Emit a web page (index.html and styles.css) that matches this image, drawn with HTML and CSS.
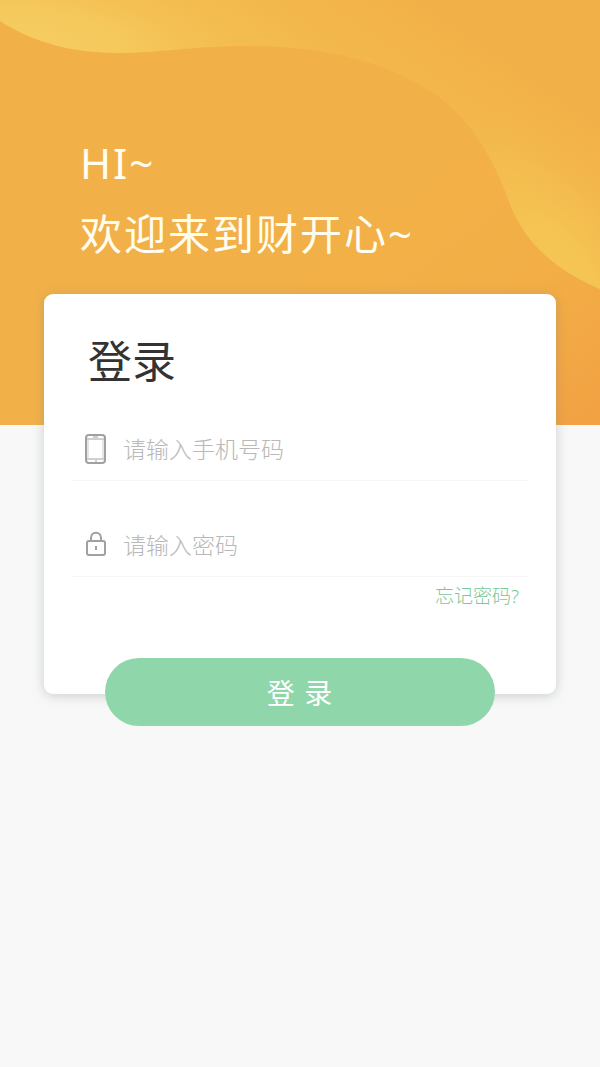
FILE: index.html
```html
<!DOCTYPE html>
<html lang="zh-CN">
<head>
    <meta charset="UTF-8">
    <meta name="viewport" content="width=device-width, initial-scale=1.0">
    <title>登录</title>
    <link rel="stylesheet" href="styles.css">
</head>
<body>
    <header class="banner">
        <svg class="banner-wave" viewBox="0 0 600 425" preserveAspectRatio="none" aria-hidden="true">
            <defs>
                <linearGradient id="base" gradientUnits="userSpaceOnUse" x1="420" y1="180" x2="600" y2="425">
                    <stop offset="0" stop-color="#f2b148"/>
                    <stop offset="0.5" stop-color="#f3ae46"/>
                    <stop offset="1" stop-color="#f2a143"/>
                </linearGradient>
                <linearGradient id="wave-mid" gradientUnits="userSpaceOnUse" x1="390" y1="110" x2="450" y2="20">
                    <stop offset="0" stop-color="#f3b94c"/>
                    <stop offset="1" stop-color="#f2b148"/>
                </linearGradient>
                <radialGradient id="wave-left" gradientUnits="userSpaceOnUse" cx="0" cy="0" r="1" gradientTransform="translate(30 40) rotate(8) scale(330 110)">
                    <stop offset="0" stop-color="#f6cc60"/>
                    <stop offset="0.3" stop-color="#f6cc60" stop-opacity="0.8"/>
                    <stop offset="1" stop-color="#f4b94d" stop-opacity="0"/>
                </radialGradient>
                <radialGradient id="wave-right" gradientUnits="userSpaceOnUse" cx="0" cy="0" r="1" gradientTransform="translate(560 270) rotate(55) scale(200 95)">
                    <stop offset="0" stop-color="#f5c654"/>
                    <stop offset="0.3" stop-color="#f5c654" stop-opacity="0.8"/>
                    <stop offset="1" stop-color="#f4b94d" stop-opacity="0"/>
                </radialGradient>
                <path id="wave-shape" d="M0 0V21C36 44 76 53 119 53C160 53 190 46 247 46C325 46 391 62 440 98C472 122 494 160 508 199C521 237 550 268 600 289V0Z"/>
            </defs>
            <rect width="600" height="425" fill="url(#base)"/>
            <use href="#wave-shape" fill="url(#wave-mid)"/>
            <use href="#wave-shape" fill="url(#wave-left)"/>
            <use href="#wave-shape" fill="url(#wave-right)"/>
        </svg>
        <p class="greeting">HI~<br>欢迎来到财开心~</p>
    </header>

    <main class="card">
        <h1>登录</h1>
        <form>
            <div class="input-group">
                <label for="phone" aria-label="手机号码">
                    <svg width="24" height="32" viewBox="0 0 24 32" fill="none" stroke="#a0a0a0">
                        <rect x="2" y="2" width="19" height="28" rx="3" stroke-width="2"/>
                        <path d="M3 6H20M3 26H20"/>
                        <path d="M4 6V26M19 6V26" stroke="#ccc"/>
                        <path d="M9 4H14M11 28H13"/>
                    </svg>
                </label>
                <input type="tel" id="phone" placeholder="请输入手机号码">
            </div>
            <div class="input-group">
                <label for="password" aria-label="密码">
                    <svg width="24" height="32" viewBox="0 0 24 32" fill="none" stroke="#a0a0a0" stroke-width="2">
                        <rect x="3" y="12" width="18" height="14" rx="2"/>
                        <path d="M7 12V9C7 2 17 2 17 9V12"/>
                        <path d="M12 17V21"/>
                    </svg>
                </label>
                <input type="password" id="password" placeholder="请输入密码">
            </div>
            <a class="forgot" href="#">忘记密码?</a>
            <button type="submit" class="btn-login">登 录</button>
        </form>
    </main>
</body>
</html>
```
FILE: styles.css
```css
* {
    box-sizing: border-box;
}

body {
    margin: 0;
    min-height: 100vh;
    font-family: "Noto Sans", "Noto Sans CJK SC", sans-serif;
    background-color: #f8f8f8;
}

.banner {
    position: relative;
    padding: 127px 80px 156px;
    background-color: #f2b148;
}

.banner-wave {
    position: absolute;
    top: 0;
    left: 0;
    width: 100%;
    height: 100%;
}

.greeting {
    position: relative;
    margin: 0;
    font-size: 42px;
    line-height: 71px;
    letter-spacing: 2px;
    color: #fffdf0;
}

.card {
    position: relative;
    margin: -131px 44px 0;
    padding: 32px 28px 0;
    background-color: #fff;
    border-radius: 9px;
    box-shadow: 0 2px 12px rgba(120, 130, 130, 0.35);
}

.card h1 {
    margin: 0 0 18px 16px;
    font-size: 44px;
    font-weight: 400;
    line-height: 70px;
    color: #333;
}

form {
    display: flex;
    flex-direction: column;
}

.input-group {
    display: flex;
    align-items: center;
    gap: 15px;
    height: 67px;
    padding: 3px 0 0 12px;
    border-bottom: 1px solid #f5f5f5;
}

.input-group + .input-group {
    margin-top: 29px;
}

.input-group label {
    display: flex;
}

.input-group input {
    flex: 1;
    min-width: 0;
    padding: 0;
    border: none;
    outline: none;
    background: none;
    font-family: inherit;
    font-size: 23px;
    font-weight: 300;
    color: #333;
}

.input-group input::placeholder {
    color: #b8b8b8;
}

.forgot {
    align-self: flex-end;
    margin-right: 9px;
    font-size: 19px;
    font-weight: 300;
    line-height: 38px;
    color: #78ca98;
    text-decoration: none;
}

.btn-login {
    height: 68px;
    margin: 43px 33px -32px;
    border: none;
    border-radius: 34px;
    background-color: #8fd6aa;
    font-family: inherit;
    font-size: 28px;
    letter-spacing: 1px;
    color: #fff;
    cursor: pointer;
}
```
